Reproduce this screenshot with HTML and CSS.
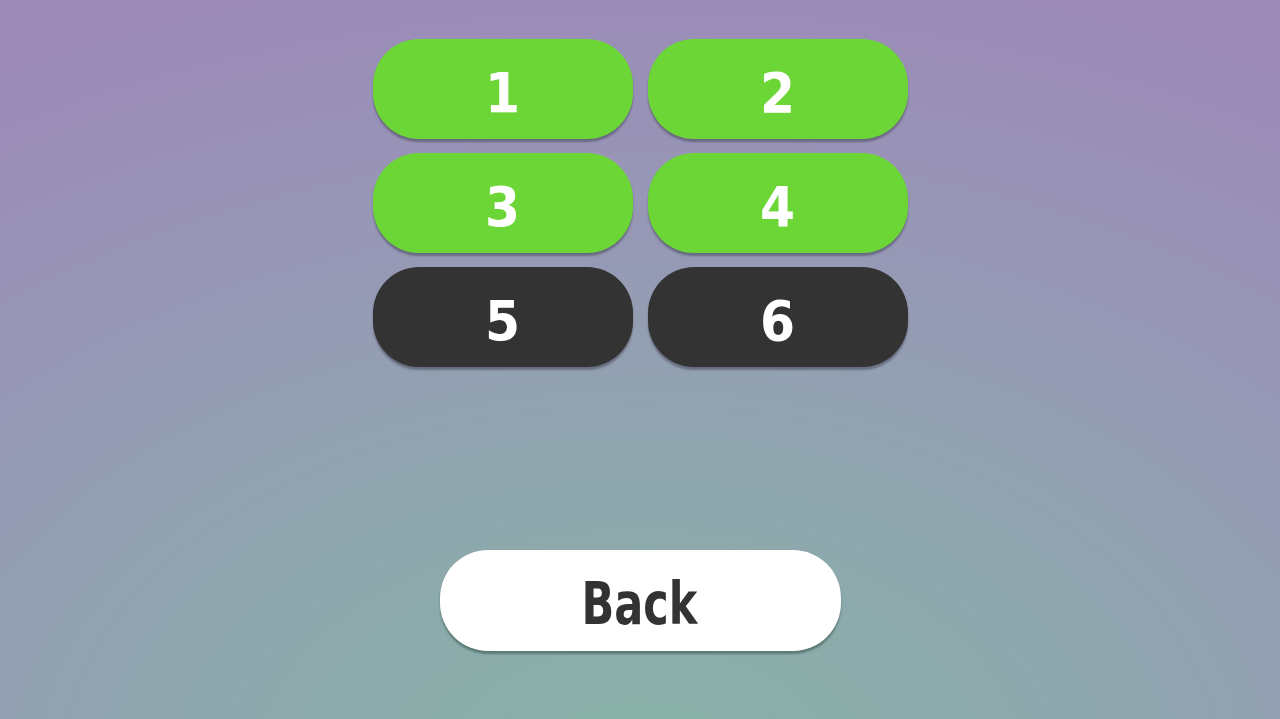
FILE: index.html
```html
<!DOCTYPE html>
<html lang="en">
<head>
	<meta charset="UTF-8">
	<title>Levels</title>

	<link rel="stylesheet" href="styles.css">
</head>
<body>

	<div class="screen">
		<div class="levels">
			<a href="#" class="level open">1</a>
			<a href="#" class="level open">2</a>
			<a href="#" class="level open">3</a>
			<a href="#" class="level open">4</a>
			<a href="#" class="level locked">5</a>
			<a href="#" class="level locked">6</a>
		</div>

		<a href="#" class="back"><span class="label">Back</span></a>
	</div>

</body>
</html>
```

FILE: styles.css
```css
*{
	margin: 0;
	padding: 0;
	box-sizing: border-box;
}

html, body{
	height: 100%;
}

body{
	font-family: "DejaVu Sans Condensed", "DejaVu Sans", sans-serif;
	background: radial-gradient(ellipse 110% 125% at 50% 108%, #87b3a6 0%, #8fa6ae 35%, #9798b6 62%, #9b8ab8 90%);
	overflow: hidden;
}

.screen{
	display: flex;
	flex-direction: column;
	align-items: center;
	padding-top: 39px;
}

.levels{
	display: grid;
	grid-template-columns: 260px 260px;
	column-gap: 15px;
	row-gap: 14px;
}

.level{
	height: 100px;
	border-radius: 46px;
	display: flex;
	align-items: center;
	justify-content: center;
	padding-top: 6px;
	color: #fff;
	text-decoration: none;
	font-weight: bold;
	font-size: 56px;
	box-shadow: 0 3px 2px rgba(70, 70, 90, 0.55);
}

.level.open{
	background: #6dd637;
}

.level.locked{
	background: #333333;
}

.back{
	margin-top: 183px;
	width: 401px;
	height: 101px;
	border-radius: 48px;
	background: #fff;
	color: #333;
	text-decoration: none;
	display: flex;
	align-items: center;
	justify-content: center;
	padding-top: 6px;
	font-weight: bold;
	font-size: 59px;
	box-shadow: 0 3px 2px rgba(60, 90, 85, 0.6);
}

/* 字形偏窄 */
.back .label{
	display: inline-block;
	transform: scaleX(0.81);
}
```
